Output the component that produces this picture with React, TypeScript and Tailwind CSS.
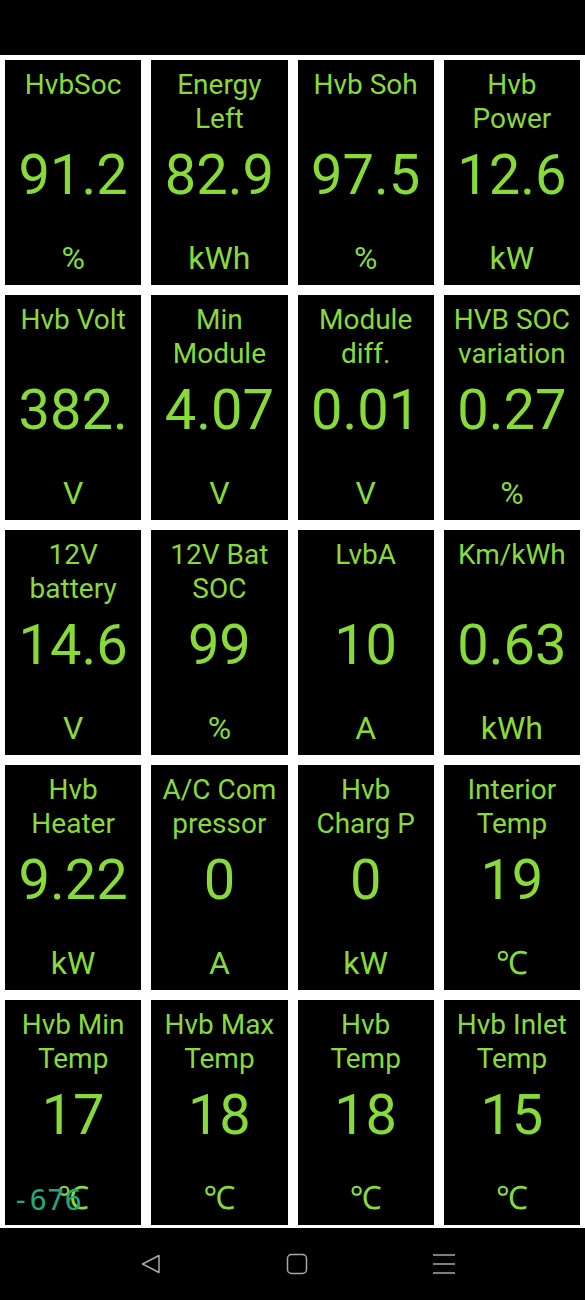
import React from 'react';

type Gauge = { label: string[]; value: string; unit: string };

const gauges: Gauge[] = [
    { label: ['HvbSoc'], value: '91.2', unit: '%' },
    { label: ['Energy', 'Left'], value: '82.9', unit: 'kWh' },
    { label: ['Hvb Soh'], value: '97.5', unit: '%' },
    { label: ['Hvb', 'Power'], value: '12.6', unit: 'kW' },
    { label: ['Hvb Volt'], value: '382.', unit: 'V' },
    { label: ['Min', 'Module'], value: '4.07', unit: 'V' },
    { label: ['Module', 'diff.'], value: '0.01', unit: 'V' },
    { label: ['HVB SOC', 'variation'], value: '0.27', unit: '%' },
    { label: ['12V', 'battery'], value: '14.6', unit: 'V' },
    { label: ['12V Bat', 'SOC'], value: '99', unit: '%' },
    { label: ['LvbA'], value: '10', unit: 'A' },
    { label: ['Km/kWh'], value: '0.63', unit: 'kWh' },
    { label: ['Hvb', 'Heater'], value: '9.22', unit: 'kW' },
    { label: ['A/C Com', 'pressor'], value: '0', unit: 'A' },
    { label: ['Hvb', 'Charg P'], value: '0', unit: 'kW' },
    { label: ['Interior', 'Temp'], value: '19', unit: '℃' },
    { label: ['Hvb Min', 'Temp'], value: '17', unit: '℃' },
    { label: ['Hvb Max', 'Temp'], value: '18', unit: '℃' },
    { label: ['Hvb', 'Temp'], value: '18', unit: '℃' },
    { label: ['Hvb Inlet', 'Temp'], value: '15', unit: '℃' },
];

function GaugeCell({ gauge }: { gauge: Gauge }) {
    return (
        <div className="bg-black h-[225px] flex flex-col items-center pt-[8px] overflow-hidden text-[#88da38] whitespace-nowrap">
            <div className="h-[68px] text-[28px] leading-[34px] text-center">
                {gauge.label.map((line, i) => (
                    <div key={i}>{line}</div>
                ))}
            </div>
            <div className="mt-[9px] text-[56px] leading-[60px]">
                {gauge.value}
            </div>
            <div className="mt-[33px] text-[32px] leading-[40px]">
                {gauge.unit}
            </div>
        </div>
    );
}

export default function App() {
    return (
        <div
            className="w-[585px] h-[1300px] bg-white flex flex-col"
            style={{ fontFamily: 'Roboto, "Noto Sans", sans-serif' }}
        >
            <div className="h-[55px] bg-black" />
            <div className="relative grid grid-cols-4 gap-[10px] px-[5px] pt-[5px] pb-[3px]">
                {gauges.map((g, i) => (
                    <GaugeCell key={i} gauge={g} />
                ))}
                <span
                    className="absolute left-[12px] top-[1128px] text-[29px] leading-[34px] text-[#22a878]"
                    style={{ fontFamily: '"DejaVu Sans Mono", monospace' }}
                >
                    -676
                </span>
            </div>
            <div className="flex-1 bg-black flex items-center pl-[140px] gap-[124px]">
                <svg width="22" height="22" viewBox="0 0 22 22" fill="none" stroke="#a8a8a8" strokeWidth="1.5" strokeLinejoin="round">
                    <path d="M19 2.5 L2.5 11 L19 19.5 Z" />
                </svg>
                <svg width="22" height="22" viewBox="0 0 22 22" fill="none" stroke="#a8a8a8" strokeWidth="1.5">
                    <rect x="1.5" y="1.5" width="19" height="19" rx="4" />
                </svg>
                <svg width="24" height="22" viewBox="0 0 24 22" fill="none" stroke="#a8a8a8" strokeWidth="1.5">
                    <path d="M1 2 H23 M1 11 H23 M1 20 H23" />
                </svg>
            </div>
        </div>
    );
}
